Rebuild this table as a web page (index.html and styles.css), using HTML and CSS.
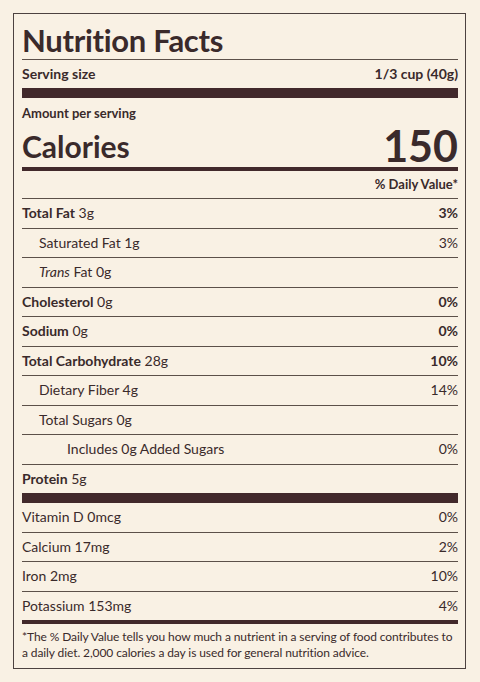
FILE: index.html
```html
<!DOCTYPE html>
<html>
<head>
  <meta charset="UTF-8">
  <title>Nutrition Facts</title>
  <meta name="viewport" content="width=device-width, initial-scale=1.0">
  <link rel="stylesheet" href="styles.css">
</head>
<body>
<!-- Nutrition label -->
<div class="label">
  <h1 class="title">Nutrition Facts</h1>

  <div class="serving">
    <span>Serving size</span>
    <span>1/3 cup (40g)</span>
  </div>
  <div class="bar bar-thick"></div>

  <div class="amount">Amount per serving</div>
  <div class="calories">
    <span>Calories</span>
    <span class="cal-num">150</span>
  </div>
  <div class="bar bar-mid"></div>

  <div class="dv">% Daily Value*</div>

  <div class="row"><span><b>Total Fat</b> 3g</span><b>3%</b></div>
  <div class="row indent"><span>Saturated Fat 1g</span><span>3%</span></div>
  <div class="row indent"><span><i>Trans</i> Fat 0g</span><span></span></div>
  <div class="row"><span><b>Cholesterol</b> 0g</span><b>0%</b></div>
  <div class="row"><span><b>Sodium</b> 0g</span><b>0%</b></div>
  <div class="row"><span><b>Total Carbohydrate</b> 28g</span><b>10%</b></div>
  <div class="row indent"><span>Dietary Fiber 4g</span><span>14%</span></div>
  <div class="row indent"><span>Total Sugars 0g</span><span></span></div>
  <div class="row indent2"><span>Includes 0g Added Sugars</span><span>0%</span></div>
  <div class="row last"><span><b>Protein</b> 5g</span><span></span></div>
  <div class="bar bar-thick"></div>

  <div class="row"><span>Vitamin D 0mcg</span><span>0%</span></div>
  <div class="row"><span>Calcium 17mg</span><span>2%</span></div>
  <div class="row"><span>Iron 2mg</span><span>10%</span></div>
  <div class="row last"><span>Potassium 153mg</span><span>4%</span></div>
  <div class="bar bar-mid"></div>

  <p class="note">*The % Daily Value tells you how much a nutrient in a serving of food contributes to a daily diet. 2,000 calories a day is used for general nutrition advice.</p>
</div>
</body>
</html>
```

FILE: styles.css
```css
body {
  font-family: Lato, "Open Sans", sans-serif;
  background-color: #f9f1e4;
  color: #3a2a2b;
  margin: 0;
  padding: 13px 14px 13px 13px;
}

.label {
  border: 1px solid #4d4240;
  padding: 0 7px 0 8px;
  height: 654px;
}

.title {
  font-size: 31px;
  font-weight: 700;
  margin: 0;
  height: 45px;
  line-height: 52px;
  border-bottom: 1px solid #5c5049;
  letter-spacing: -0.3px;
}

.serving {
  display: flex;
  justify-content: space-between;
  font-size: 14px;
  font-weight: 700;
  height: 28px;
  line-height: 27px;
}

.bar {
  background: #42292b;
}

.bar-thick {
  height: 10px;
}

.bar-mid {
  height: 4px;
}

.amount {
  font-size: 13px;
  font-weight: 700;
  height: 22px;
  line-height: 31px;
}

.calories {
  display: flex;
  justify-content: space-between;
  align-items: flex-end;
  height: 47px;
  font-size: 30px;
  font-weight: 700;
}

.calories span:first-child {
  line-height: 38px;
  margin-bottom: 2px;
}

.cal-num {
  font-size: 43px;
  font-weight: 700;
  line-height: 40px;
  margin-bottom: 1px;
}

.dv {
  text-align: right;
  font-size: 13px;
  font-weight: 700;
  height: 27px;
  line-height: 27px;
  border-bottom: 1px solid #5c5049;
}

.row {
  display: flex;
  justify-content: space-between;
  font-size: 14px;
  height: 28.5px;
  line-height: 28px;
  border-bottom: 1px solid #5c5049;
}

.row.last {
  border-bottom: none;
}

.indent {
  padding-left: 17px;
}

.indent2 {
  padding-left: 45px;
}

.note {
  font-size: 12px;
  line-height: 16px;
  letter-spacing: -0.1px;
  margin: 5px 0 0;
}
```
